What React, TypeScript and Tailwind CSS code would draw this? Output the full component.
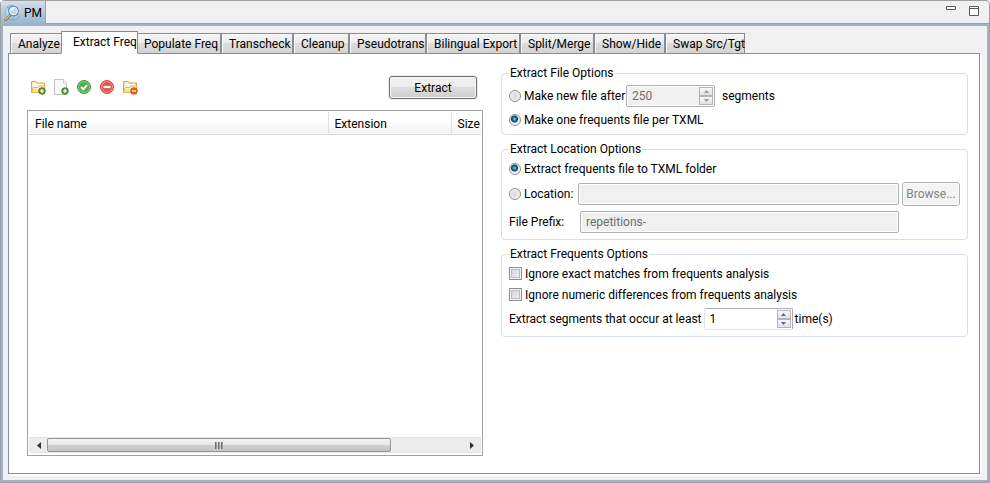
import React, { useState } from 'react'

interface Tab {
  label: string
  width: string
}

const tabs: Tab[] = [
  { label: 'Analyze', width: 'w-[53px]' },
  { label: 'Extract Freq', width: 'w-[77px]' },
  { label: 'Populate Freq', width: 'w-[85px]' },
  { label: 'Transcheck', width: 'w-[72px]' },
  { label: 'Cleanup', width: 'w-[56px]' },
  { label: 'Pseudotrans', width: 'w-[77px]' },
  { label: 'Bilingual Export', width: 'w-[94px]' },
  { label: 'Split/Merge', width: 'w-[74px]' },
  { label: 'Show/Hide', width: 'w-[71px]' },
  { label: 'Swap Src/Tgt', width: 'w-[80px]' },
]

const PmIcon = () => (
  <svg width="16" height="16" viewBox="0 0 16 16" fill="none" aria-hidden="true">
    <path d="M3 2l5-2 2 1 4 11-5 3-5-1z" fill="#a9cbe6" stroke="#6f9cc4" strokeWidth="0.7" />
    <path d="M1 5l3-3 2 8-3 4z" fill="#bcd9ee" stroke="#6f9cc4" strokeWidth="0.6" />
    <path d="M13 9l2 3-4 3-3-2z" fill="#a9cbe6" stroke="#6f9cc4" strokeWidth="0.6" />
    <path d="M6 10.500L1.500 15" stroke="#8a7440" strokeWidth="2.600" strokeLinecap="round" />
    <path d="M6 10.200L1.500 14.500" stroke="#d8bd74" strokeWidth="1.200" strokeLinecap="round" />
    <circle cx="9.500" cy="6" r="4.800" fill="#b9d9f1" stroke="#5f7f9f" strokeWidth="1.100" />
    <circle cx="9.500" cy="6" r="3.800" stroke="#f4faff" strokeWidth="0.800" />
    <path d="M7.500 6a2.500 2.500 0 0 1 2.500-2.500" stroke="#fff" strokeWidth="1.200" />
  </svg>
)

const Folder = () => (
  <>
    <path d="M1.500 13.500v-11h4.500l1 1.500h7.500v9.500z" fill="#fdeebb" stroke="#dba63c" />
    <path d="M3.500 5.500h9M3.500 7.500h5" stroke="#fff" />
    <path d="M1.500 13.500l1.500-5h5l1-1.500h6l-1 6.500z" fill="#fce197" stroke="#e3b44f" strokeWidth="0.900" />
    <path d="M3.500 9.500h5l1-1.500h4.500" stroke="#fff3c8" strokeWidth="0.800" />
  </>
)

const PlusBadge = () => (
  <>
    <circle cx="12" cy="12" r="3.300" fill="#5f9a3c" stroke="#35701c" strokeWidth="0.800" />
    <path d="M12 10v4M10 12h4" stroke="#fff" strokeWidth="1.200" />
  </>
)

const AddFolderIcon = () => (
  <svg width="16" height="16" viewBox="0 0 16 16" fill="none" aria-hidden="true">
    <Folder />
    <PlusBadge />
  </svg>
)

const AddFileIcon = () => (
  <svg width="16" height="16" viewBox="0 0 16 16" fill="none" aria-hidden="true">
    <path d="M1.500.5h9l3 3.500v11.500h-12z" fill="#f8f8f8" stroke="#c4c4c4" />
    <path d="M10.500.5v3.500h3" fill="#fff" stroke="#c4c4c4" strokeWidth="0.800" />
    <PlusBadge />
  </svg>
)

const CheckIcon = () => (
  <svg width="16" height="16" viewBox="0 0 16 16" fill="none" aria-hidden="true">
    <circle cx="8" cy="8" r="6.500" fill="#4fae4b" stroke="#3a9440" />
    <circle cx="8" cy="8" r="5.500" stroke="#8fd287" strokeWidth="0.900" />
    <path d="M5 8l2.300 2.300L11 6.200" stroke="#fff" strokeWidth="2" />
  </svg>
)

const RemoveIcon = () => (
  <svg width="16" height="16" viewBox="0 0 16 16" fill="none" aria-hidden="true">
    <circle cx="8" cy="8" r="6.500" fill="#e4574d" stroke="#cf4440" />
    <circle cx="8" cy="8" r="5.500" stroke="#f39b93" strokeWidth="0.900" />
    <path d="M4.500 8h7" stroke="#fff" strokeWidth="2.200" />
  </svg>
)

const RemoveFolderIcon = () => (
  <svg width="16" height="16" viewBox="0 0 16 16" fill="none" aria-hidden="true">
    <Folder />
    <circle cx="12" cy="12" r="3.300" fill="#e8661c" stroke="#c04a0c" strokeWidth="0.800" />
    <path d="M10 12h4" stroke="#fff" strokeWidth="1.300" />
  </svg>
)

const tools = [
  { name: 'Add folder', icon: AddFolderIcon },
  { name: 'Add file', icon: AddFileIcon },
  { name: 'Check all', icon: CheckIcon },
  { name: 'Remove', icon: RemoveIcon },
  { name: 'Remove folder', icon: RemoveFolderIcon },
]

// The selected tab stands a little taller and laps over its neighbours and the panel's top border
const tabClass = (tab: Tab, selected: boolean) => {
  const base = `${tab.width} shrink-0 whitespace-nowrap border border-[#898c95] text-left`
  return selected
    ? `${base} z-10 -mx-0.5 h-[23px] border-b-white bg-white pb-0.5 pl-[11px]`
    : `${base} h-[21px] bg-[linear-gradient(#f4f4f4,#ebebeb_50%,#dddddd_50%,#d2d2d2)] pl-[7px] shadow-[inset_1px_1px_0_#fafafa]`
}

interface GroupProps {
  title: string
  children: React.ReactNode
}

const Group = ({ title, children }: GroupProps) => (
  <fieldset className="min-w-0 rounded-[4px] border border-[#d5dfe5] px-[7px] pb-1.5">
    <legend className="h-4 px-px leading-4">{title}</legend>
    <div className="flex flex-col gap-[5px] pt-1">{children}</div>
  </fieldset>
)

interface RadioProps {
  name: string
  label: string
  checked: boolean
  onChange: () => void
}

const Radio = ({ name, label, checked, onChange }: RadioProps) => (
  <label className="flex h-4 items-center gap-[3px] whitespace-nowrap">
    <input
      type="radio"
      name={name}
      checked={checked}
      onChange={onChange}
      className="size-3 shrink-0 appearance-none rounded-full border border-[#8e8f8f] bg-[radial-gradient(circle,#d2d6da_0%,#f4f4f4_75%)] checked:bg-[radial-gradient(circle_at_45%_40%,#7fd4f5_0px,#1d6c96_2px,#12395a_3px,#dfe5ea_4px,#f4f4f4_5px)]"
    />
    {label}
  </label>
)

const Check = ({ label }: { label: string }) => (
  <label className="flex h-4 items-start gap-[3px] whitespace-nowrap">
    <input
      type="checkbox"
      className="mt-px size-[13px] shrink-0 appearance-none border border-[#8e8f8f] bg-linear-to-br from-[#cbcfd5] to-[#f6f6f6] shadow-[inset_0_0_0_1px_#f4f4f4,inset_0_0_0_2px_#b9bcc2] checked:bg-[#3f6fa0]"
    />
    {label}
  </label>
)

interface SpinnerProps {
  id: string
  value: number
  disabled?: boolean
  onChange: (value: number) => void
}

const Spinner = ({ id, value, disabled, onChange }: SpinnerProps) => (
  <div
    className={
      disabled
        ? 'flex h-[22px] w-[89px] rounded-[2px] border border-[#afafaf] bg-[#f0f0f0] text-[#6d6d6d] shadow-[inset_0_0_0_1px_#fff]'
        : 'flex h-[22px] w-[89px] rounded-[2px] border border-[#e2e3ea] border-t-[#abadb3] border-r-[#abadb3] bg-white text-black'
    }
  >
    <input
      id={id}
      type="text"
      value={value}
      disabled={disabled}
      onChange={(e) => onChange(Number(e.target.value) || 0)}
      className="w-0 flex-1 bg-transparent pl-[5px] outline-none"
    />
    <div className="flex w-4 flex-col p-px">
      <button
        type="button"
        aria-label="Increase"
        disabled={disabled}
        onClick={() => onChange(value + 1)}
        className="flex flex-1 items-center justify-center border border-[#b4b4b8] bg-linear-to-b from-[#f8f8f8] to-[#e2e2e4]"
      >
        <svg width="5" height="3" viewBox="0 0 5 3">
          <path d="M0 3h5L2.500 0z" fill={disabled ? '#9a9a9a' : '#4f66b0'} />
        </svg>
      </button>
      <button
        type="button"
        aria-label="Decrease"
        disabled={disabled}
        onClick={() => onChange(value - 1)}
        className="flex flex-1 items-center justify-center border border-[#b4b4b8] bg-linear-to-b from-[#f8f8f8] to-[#e2e2e4]"
      >
        <svg width="5" height="3" viewBox="0 0 5 3">
          <path d="M0 0h5L2.500 3z" fill={disabled ? '#9a9a9a' : '#4f66b0'} />
        </svg>
      </button>
    </div>
  </div>
)

const FileList = () => (
  <div className="flex min-w-0 flex-1 flex-col overflow-hidden border border-[#a0a0a5] bg-white p-px">
    <table className="w-full table-fixed border-collapse text-left">
      <thead>
        <tr className="h-[22px] border-b border-[#d5d5d5] bg-linear-to-b from-white from-40% to-[#f1f2f4]">
          <th className="w-[299px] border-r border-[#dfe0e2] pt-0.5 pl-1.5 font-normal">File name</th>
          <th className="w-[123px] border-r border-[#dfe0e2] pt-0.5 pl-1.5 font-normal">Extension</th>
          <th className="pt-0.5 pl-1.5 font-normal">Size</th>
        </tr>
      </thead>
      <tbody />
    </table>
    <div className="mt-auto mb-px flex h-4 border border-[#e6e6e6] bg-[#ececec]">
      <button type="button" aria-label="Scroll left" className="flex w-[17px] items-center justify-center">
        <svg width="4" height="7" viewBox="0 0 4 7">
          <path d="M4 0v7L0 3.500z" fill="#303030" />
        </svg>
      </button>
      <div className="flex w-[344px] items-start justify-center gap-px rounded-[2px] border border-[#979797] bg-[linear-gradient(#f4f4f4,#e6e6e6_48%,#d0d0d2_50%,#c4c4c8)] pt-[3px]">
        <span className="h-[7px] w-0.5 bg-linear-to-r from-[#555] to-[#bbb]" />
        <span className="h-[7px] w-0.5 bg-linear-to-r from-[#555] to-[#bbb]" />
        <span className="h-[7px] w-0.5 bg-linear-to-r from-[#555] to-[#bbb]" />
      </div>
      <button type="button" aria-label="Scroll right" className="ml-auto flex w-[17px] items-center justify-center">
        <svg width="4" height="7" viewBox="0 0 4 7">
          <path d="M0 0v7l4-3.500z" fill="#303030" />
        </svg>
      </button>
    </div>
  </div>
)

export default function App() {
  const [active, setActive] = useState('Extract Freq')
  const [fileMode, setFileMode] = useState('single')
  const [locationMode, setLocationMode] = useState('txml')
  const [segments, setSegments] = useState(250)
  const [times, setTimes] = useState(1)

  return (
    <div className="flex min-h-screen flex-col rounded-t-[4px] border border-[#a0a0a0] bg-[#f0f0f0] font-['Roboto','Noto_Sans',sans-serif] text-[12px] leading-4 text-black">
      <header className="flex h-[23px]">
        <div className="flex w-[45px] items-center gap-1 border-r border-[#a0a0a0] bg-linear-to-b from-[#d3dfec] to-[#99b4d1] pl-[3px]">
          <PmIcon />
          <span>PM</span>
        </div>
        <div className="flex flex-1 items-start justify-end gap-[13px] border-b border-[#a0a0a0] pt-[5px] pr-[10px]">
          <button type="button" aria-label="Minimize">
            <svg width="10" height="4" viewBox="0 0 10 4" className="block">
              <path d="M.5.5h9v3h-9z" fill="#fff" stroke="#5a5a5a" />
            </svg>
          </button>
          <button type="button" aria-label="Maximize">
            <svg width="10" height="10" viewBox="0 0 10 10" className="block">
              <path d="M.5.5h9v9h-9zM.5 2.500h9" fill="#fff" stroke="#5a5a5a" />
            </svg>
          </button>
        </div>
      </header>

      <div className="flex flex-1 flex-col border-2 border-[#99b4d1] pt-[5px] pr-[7px] pb-1.5 pl-[5px]">
        <nav className="z-10 -mb-px flex items-end pl-0.5">
          {tabs.map((tab) => (
            <button
              key={tab.label}
              type="button"
              onClick={() => setActive(tab.label)}
              className={tabClass(tab, tab.label === active)}
            >
              {tab.label}
            </button>
          ))}
        </nav>

        <main className="grid flex-1 grid-cols-[minmax(0,456fr)_minmax(0,467fr)] gap-[18px] border border-[#898c95] bg-white pr-[11px] pb-[17px] pl-[18px] shadow-[2px_2px_0_#fff]">
          <section className="flex flex-col pt-[22px]">
            <div className="mb-[11px] flex items-center justify-between pr-1.5 pl-[3px]">
              <div className="flex gap-[7px] pb-px">
                {tools.map(({ name, icon: Icon }) => (
                  <button key={name} type="button" aria-label={name}>
                    <Icon />
                  </button>
                ))}
              </div>
              <button
                type="button"
                className="h-[23px] w-[88px] rounded-[3px] border border-[#707070] bg-[linear-gradient(#f2f2f2,#ebebeb_50%,#dddddd_50%,#cfcfcf)] shadow-[inset_0_0_0_1px_#f8f8f8,0_0_0_1px_#f0f0f0]"
              >
                Extract
              </button>
            </div>
            <FileList />
          </section>

          <section className="flex flex-col gap-1.5 pt-[11px]">
            <Group title="Extract File Options">
              <div className="flex items-center">
                <div className="w-[117px]">
                  <Radio
                    name="file-mode"
                    label="Make new file after"
                    checked={fileMode === 'multi'}
                    onChange={() => setFileMode('multi')}
                  />
                </div>
                <Spinner
                  id="segments"
                  value={segments}
                  disabled={fileMode !== 'multi'}
                  onChange={setSegments}
                />
                <label htmlFor="segments" className="pl-[7px]">
                  segments
                </label>
              </div>
              <Radio
                name="file-mode"
                label="Make one frequents file per TXML"
                checked={fileMode === 'single'}
                onChange={() => setFileMode('single')}
              />
            </Group>

            <Group title="Extract Location Options">
              <Radio
                name="location-mode"
                label="Extract frequents file to TXML folder"
                checked={locationMode === 'txml'}
                onChange={() => setLocationMode('txml')}
              />
              <div className="flex items-center">
                <div className="w-[69px]">
                  <Radio
                    name="location-mode"
                    label="Location:"
                    checked={locationMode === 'custom'}
                    onChange={() => setLocationMode('custom')}
                  />
                </div>
                <input
                  type="text"
                  aria-label="Location"
                  disabled={locationMode !== 'custom'}
                  className="h-[22px] min-w-0 flex-1 rounded-[2px] border border-[#afafaf] bg-[#f0f0f0] px-[5px] shadow-[inset_0_0_0_1px_#fff]"
                />
                <button
                  type="button"
                  disabled={locationMode !== 'custom'}
                  className="ml-[3px] h-6 w-[58px] rounded-[3px] border border-[#adb2b5] bg-[#f4f4f4] text-[#838383] shadow-[inset_0_0_0_1px_#fcfcfc]"
                >
                  Browse...
                </button>
              </div>
              <div className="flex items-center pr-[61px]">
                <label htmlFor="prefix" className="w-[71px]">
                  File Prefix:
                </label>
                <input
                  id="prefix"
                  type="text"
                  disabled
                  defaultValue="repetitions-"
                  className="h-[22px] min-w-0 flex-1 rounded-[2px] border border-[#afafaf] bg-[#f0f0f0] px-[5px] text-[#6d6d6d] shadow-[inset_0_0_0_1px_#fff]"
                />
              </div>
            </Group>

            <Group title="Extract Frequents Options">
              <Check label="Ignore exact matches from frequents analysis" />
              <Check label="Ignore numeric differences from frequents analysis" />
              <div className="flex items-center gap-0.5 whitespace-nowrap">
                <label htmlFor="times">Extract segments that occur at least</label>
                <Spinner id="times" value={times} onChange={setTimes} />
                <span>time(s)</span>
              </div>
            </Group>
          </section>
        </main>
      </div>
    </div>
  )
}
